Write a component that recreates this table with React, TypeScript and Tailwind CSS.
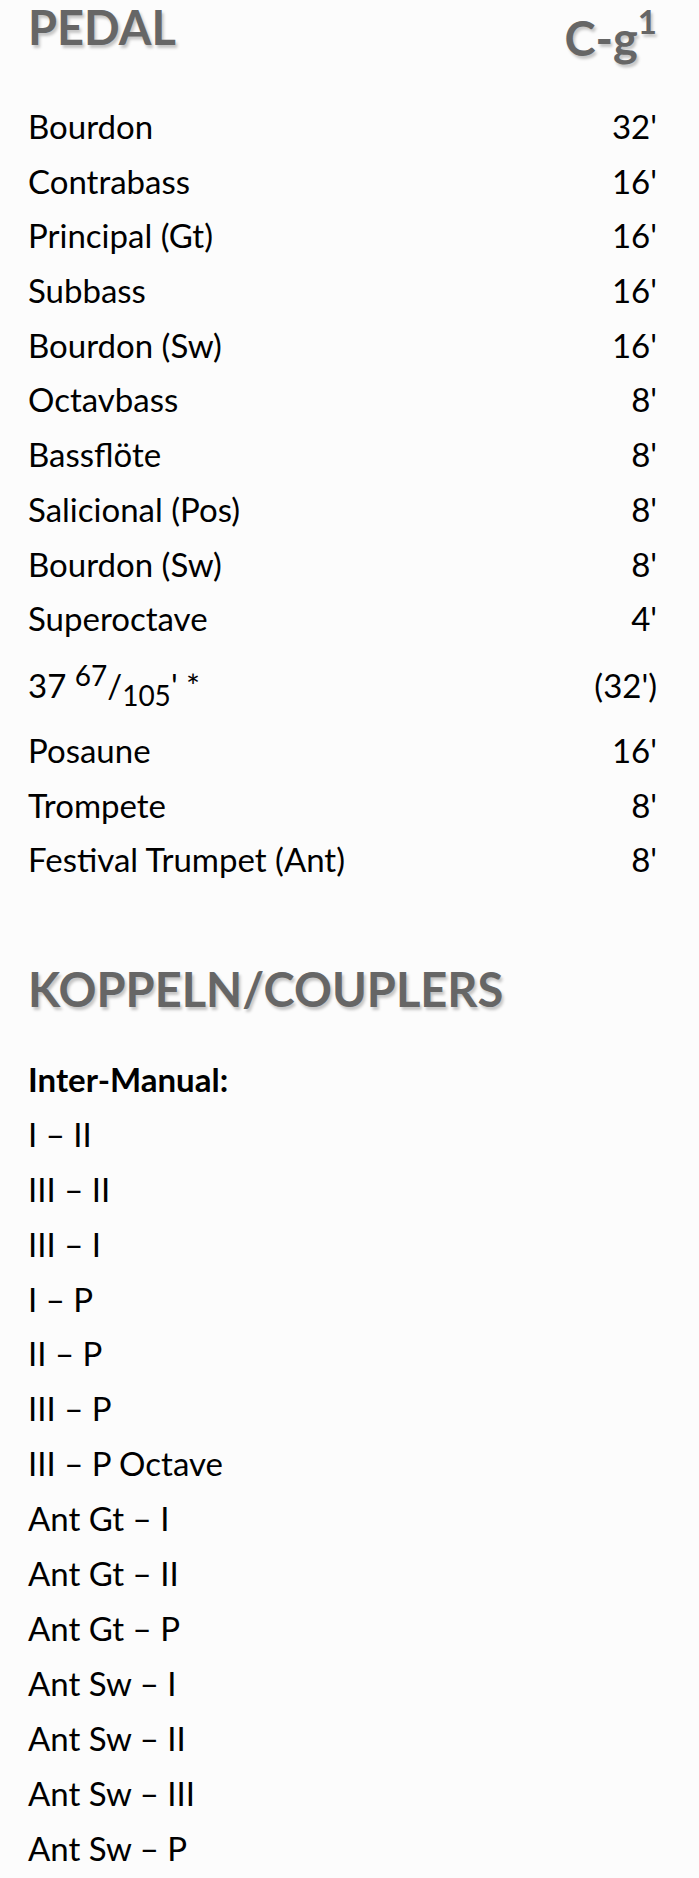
import React from 'react'

type Stop = { name: React.ReactNode; pitch: string; tall?: boolean }

const pedal: Stop[] = [
  { name: 'Bourdon', pitch: "32'" },
  { name: 'Contrabass', pitch: "16'" },
  { name: 'Principal (Gt)', pitch: "16'" },
  { name: 'Subbass', pitch: "16'" },
  { name: 'Bourdon (Sw)', pitch: "16'" },
  { name: 'Octavbass', pitch: "8'" },
  { name: 'Bassflöte', pitch: "8'" },
  { name: 'Salicional (Pos)', pitch: "8'" },
  { name: 'Bourdon (Sw)', pitch: "8'" },
  { name: 'Superoctave', pitch: "4'" },
  {
    name: (
      <>
        37{' '}
        <span className="relative top-[-12px] text-[28px]">67</span>/
        <span className="relative top-[8px] text-[28px]">105</span>' *
      </>
    ),
    pitch: "(32')",
    tall: true,
  },
  { name: 'Posaune', pitch: "16'" },
  { name: 'Trompete', pitch: "8'" },
  { name: 'Festival Trumpet (Ant)', pitch: "8'" },
]

const couplers = [
  'I – II',
  'III – II',
  'III – I',
  'I – P',
  'II – P',
  'III – P',
  'III – P Octave',
  'Ant Gt – I',
  'Ant Gt – II',
  'Ant Gt – P',
  'Ant Sw – I',
  'Ant Sw – II',
  'Ant Sw – III',
  'Ant Sw – P',
]

const headingClass =
  "text-[47px] leading-[55px] font-bold text-[#666666] [text-shadow:2px_3px_3px_rgba(0,0,0,0.22)]"

export default function App() {
  return (
    <div className="min-h-screen bg-[#fcfcfc] pl-[28px] pr-[42px] font-['Lato',sans-serif] text-black">
      {/* Pedal header */}
      <div className="flex h-[55px] items-start justify-between">
        <h2 className={headingClass}>PEDAL</h2>
        <h2 className={headingClass + ' pt-[11px]'}>
          C-g<sup className="top-[-22px] text-[33px]">1</sup>
        </h2>
      </div>

      {/* Pedal stops */}
      <div className="mt-[44px]">
        {pedal.map((stop, i) => (
          <div
            key={i}
            className={
              stop.tall
                ? 'flex h-[77px] items-start justify-between pt-[12px] text-[33px] leading-[55px]'
                : 'flex h-[54.7px] items-start justify-between text-[33px] leading-[55px]'
            }
          >
            <span>{stop.name}</span>
            <span>{stop.pitch}</span>
          </div>
        ))}
      </div>

      {/* Couplers */}
      <h2 className={headingClass + ' mt-[75px]'}>KOPPELN/COUPLERS</h2>
      <div className="mt-[35px] text-[33px] leading-[54.9px]">
        <p className="font-bold">Inter-Manual:</p>
        {couplers.map((c) => (
          <p key={c}>{c}</p>
        ))}
      </div>
    </div>
  )
}
